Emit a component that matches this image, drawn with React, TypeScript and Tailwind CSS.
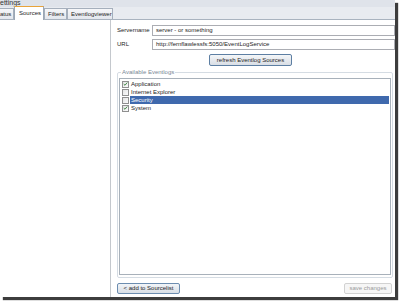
const eventlogs = [
  { name: "Application", checked: true, selected: false },
  { name: "Internet Explorer", checked: false, selected: false },
  { name: "Security", checked: false, selected: true },
  { name: "System", checked: true, selected: false },
];

function CheckBox({ checked }: { checked: boolean }) {
  return (
    <span className="flex h-[7px] w-[7px] shrink-0 items-center justify-center border border-[#8f8f8f] bg-gradient-to-br from-[#e4e4e4] to-[#fbfbfb]">
      {checked && (
        <svg viewBox="0 0 8 8" className="h-[6px] w-[6px]">
          <path d="M1.2 4.2 L3.2 6 L6.8 1.6" fill="none" stroke="#2f7d32" strokeWidth={1.4} />
        </svg>
      )}
    </span>
  );
}

function Tab({ label, active, className = "" }: { label: string; active?: boolean; className?: string }) {
  if (active) {
    return (
      <div
        className={`-mb-px flex h-[14px] items-center border border-b-0 border-[#9ba7b5] border-t-[#e8a33a] bg-white px-[4px] ${className}`}
      >
        {label}
      </div>
    );
  }
  return (
    <div
      className={`flex h-[11px] items-center border border-b-0 border-[#a5afbc] bg-gradient-to-b from-[#f6f7f9] to-[#e3e7ed] px-[3px] ${className}`}
    >
      {label}
    </div>
  );
}

export default function App() {
  return (
    <div className="h-[303px] w-[400px] overflow-hidden bg-white font-['Liberation_Sans',Arial,sans-serif] text-[6px] text-[#1e1e1e]">
      <div className="flex h-[297px] w-[395px] flex-col overflow-hidden bg-white shadow-[3px_3px_1px_#3d3d3d]">
        {/* title bar, mostly cut off */}
        <div className="h-[7px] overflow-hidden bg-[#dfe3ea]">
          <div className="-mt-[2px] text-[7px] leading-[9px] text-[#333]">ettings</div>
        </div>

        {/* tab strip */}
        <div className="flex h-[13px] items-end border-b border-[#a9b3bf] bg-[#e8ebf0]">
          <Tab label="atus" className="w-[14px] border-l-0 pl-0" />
          <Tab label="Sources" active className="w-[30px]" />
          <Tab label="Filters" className="w-[23px]" />
          <Tab label="Eventlogviewer" className="w-[46px]" />
        </div>

        {/* tab page */}
        <div className="flex min-h-0 flex-1">
          <div className="w-[111px] shrink-0 border-r border-[#c4c8cd] bg-white" />

          <div className="flex min-w-0 flex-1 flex-col bg-white pl-[6px] pt-[5px] pb-[3px]">
            <div className="flex h-[11px] items-center">
              <span className="w-[35px] shrink-0">Servername</span>
              <div className="flex h-full flex-1 items-center border border-[#abadb3] bg-white pl-[3px]">
                server - or something
              </div>
            </div>
            <div className="mt-[3px] flex h-[11px] items-center">
              <span className="w-[35px] shrink-0">URL</span>
              <div className="flex h-full flex-1 items-center border border-[#abadb3] bg-white pl-[3px]">
                http://fernflawlessfs:5050/EventLogService
              </div>
            </div>

            <div className="mt-[4px] flex pl-[92px]">
              <button className="flex h-[12px] w-[83px] items-center justify-center rounded-[2px] border border-[#5d7fa3] bg-gradient-to-b from-[#f4f6f8] to-[#d9dee5]">
                refresh Eventlog Sources
              </button>
            </div>

            <fieldset className="mt-[2px] mr-[2px] flex min-h-0 flex-1 flex-col rounded-[2px] border border-[#d5dce3] px-[1px] pb-[2px]">
              <legend className="ml-[2px] px-[1px] text-[#7a8896]">Available Eventlogs</legend>
              <div className="mt-[1px] flex-1 border border-[#a8b1ba] bg-white pt-[1px] pr-[1px]">
                {eventlogs.map((log) => (
                  <div key={log.name} className="flex h-[8px] items-center pl-[2px]">
                    <CheckBox checked={log.checked} />
                    <span
                      className={`ml-[1px] flex h-full flex-1 items-center pl-[1px] ${
                        log.selected ? "bg-[#3f69ad] text-white" : ""
                      }`}
                    >
                      {log.name}
                    </span>
                  </div>
                ))}
              </div>
            </fieldset>

            <div className="mt-[5px] flex items-center justify-between pr-[3px]">
              <button className="flex h-[11px] w-[63px] items-center justify-center rounded-[2px] border border-[#6c8db0] bg-gradient-to-b from-[#f2f5f8] to-[#d8dee6]">
                &lt; add to Sourcelist
              </button>
              <button className="flex h-[11px] w-[48px] items-center justify-center rounded-[2px] border border-[#d2d2d2] bg-[#f6f6f6] text-[#9a9a9a]">
                save changes
              </button>
            </div>
          </div>
        </div>
      </div>
    </div>
  );
}
